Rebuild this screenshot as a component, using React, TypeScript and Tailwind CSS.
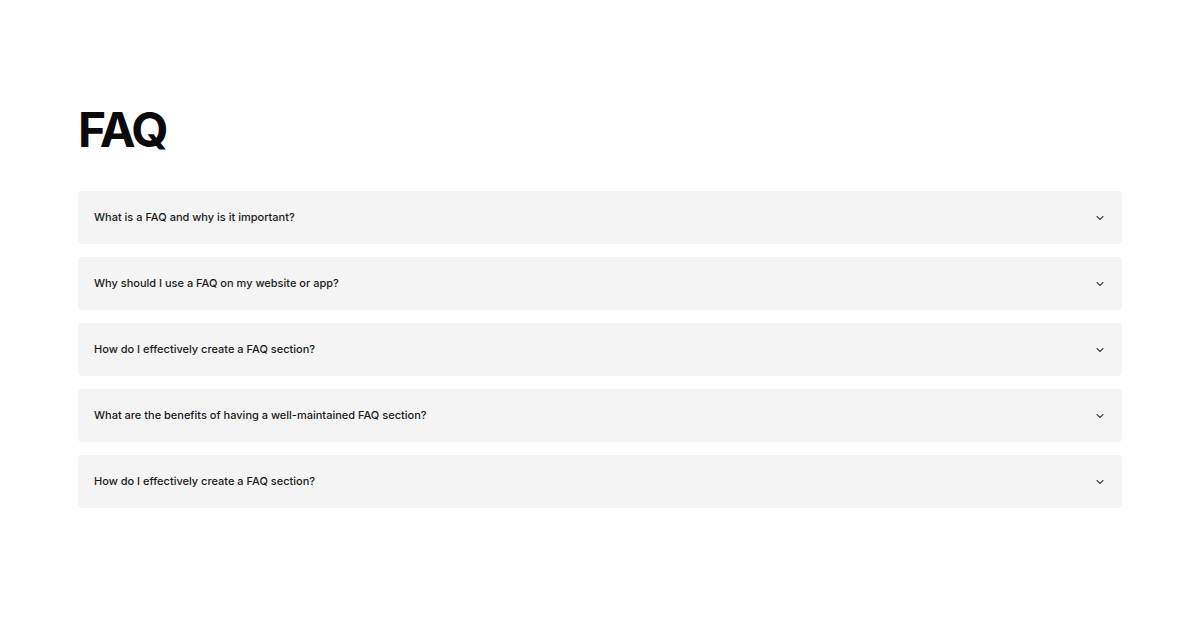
import { ChevronDown } from 'lucide-react';

const questions = [
  'What is a FAQ and why is it important?',
  'Why should I use a FAQ on my website or app?',
  'How do I effectively create a FAQ section?',
  'What are the benefits of having a well-maintained FAQ section?',
  'How do I effectively create a FAQ section?',
];

export default function App() {
  return (
    <main className="min-h-screen bg-white px-[78px] pt-[106px] font-['Inter',sans-serif] text-[#111]">
      <h1 className="mb-[37px] text-[48px] font-bold leading-[48px] tracking-[-0.045em] text-[#0a0a0a]">FAQ</h1>

      <div className="flex flex-col gap-[13px]">
        {questions.map((q, i) => (
          <button
            key={i}
            className="flex h-[53px] w-full items-center justify-between rounded-[4px] bg-[#f4f4f4] pl-4 pr-[16px] text-left"
          >
            <span className="text-[11px] font-medium text-[#1a1a1a]">{q}</span>
            <ChevronDown className="h-[12px] w-[12px] text-[#444]" strokeWidth={2.25} />
          </button>
        ))}
      </div>
    </main>
  );
}
